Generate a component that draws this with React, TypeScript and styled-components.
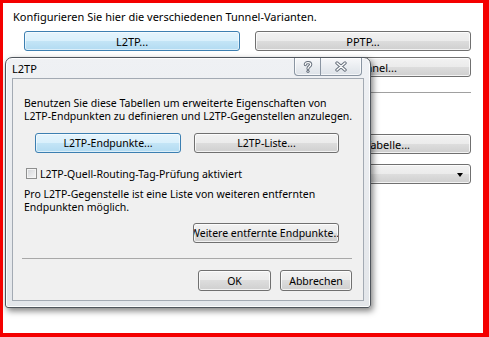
import React from 'react';
import styled, { createGlobalStyle, css } from 'styled-components';

const GlobalStyle = createGlobalStyle`
    html, body {
        margin: 0;
        padding: 0;
        background: #fff;
    }
    body {
        font-family: "Noto Sans", "Liberation Sans", Arial, sans-serif;
        font-size: 11px;
        color: #000;
    }
`;

const Page = styled.div`
    position: relative;
    box-sizing: border-box;
    width: 489px;
    height: 337px;
    border-style: solid;
    border-color: #f40000;
    border-width: 3px 6px 4px 3px;
    background: #fff;
    overflow: hidden;
`;

const Backdrop = styled.div`
    padding: 7px 0 0 10px;
`;

const Intro = styled.p`
    margin: 0;
    line-height: 14px;
`;

const ColumnGrid = styled.div<{ $top: number; $gap: number }>`
    display: grid;
    grid-template-columns: 216px 216px;
    grid-auto-rows: 20px;
    column-gap: 15px;
    row-gap: ${p => p.$gap}px;
    margin: ${p => p.$top}px 0 0 11px;
`;

const Rule = styled.div`
    width: 458px;
    margin-top: 15px;
    border-top: 1px solid #a0a0a0;
    border-bottom: 1px solid #fff;
`;

const buttonBase = css`
    box-sizing: border-box;
    display: inline-flex;
    align-items: center;
    justify-content: center;
    padding: 0;
    overflow: hidden;
    white-space: nowrap;
    font: inherit;
    color: #000;
    border-radius: 3px;
`;

const Button = styled.button<{ $w?: number; $h?: number; $default?: boolean }>`
    ${buttonBase}
    width: ${p => (p.$w ? `${p.$w}px` : '100%')};
    height: ${p => p.$h ?? 20}px;
    border: 1px solid ${p => (p.$default ? '#3c7fb1' : '#707070')};
    background: ${p =>
        p.$default
            ? 'linear-gradient(#e5f4fc 0%, #d9f0fc 50%, #c4e5f6 50%, #b2dbf2 100%)'
            : 'linear-gradient(#f2f2f2 0%, #ebebeb 50%, #dddddd 50%, #cfcfcf 100%)'};
    box-shadow: inset 0 0 0 1px ${p => (p.$default ? 'rgba(255,255,255,0.55)' : 'rgba(255,255,255,0.75)')};
`;

const Combo = styled.div`
    ${buttonBase}
    position: relative;
    height: 20px;
    border: 1px solid #707070;
    background: linear-gradient(#f2f2f2 0%, #ebebeb 50%, #dddddd 50%, #cfcfcf 100%);
    box-shadow: inset 0 0 0 1px rgba(255, 255, 255, 0.75);
    justify-content: flex-start;
    padding-left: 4px;
`;

const ComboArrow = styled.span`
    position: absolute;
    right: 7px;
    top: 8px;
    width: 0;
    height: 0;
    border-left: 3.5px solid transparent;
    border-right: 3.5px solid transparent;
    border-top: 4px solid #000;
`;

/* dialog */

const Dialog = styled.div`
    position: absolute;
    left: 2px;
    top: 54px;
    box-sizing: border-box;
    width: 366px;
    height: 251px;
    display: flex;
    flex-direction: column;
    padding: 0 6px 6px 6px;
    border: 1px solid #4f555c;
    border-radius: 7px 7px 3px 3px;
    background: linear-gradient(#eff1f4, #e3e6ea);
    box-shadow: inset 0 0 0 1px rgba(255, 255, 255, 0.85), 2px 3px 6px rgba(0, 0, 0, 0.5);
    font-size: 10.5px;
`;

const TitleBar = styled.div`
    display: flex;
    justify-content: space-between;
    align-items: center;
    height: 20px;
    font-size: 11px;
`;

const CaptionGroup = styled.div`
    align-self: flex-start;
    display: flex;
    height: 17px;
    margin-right: 2px;
    border: 1px solid #8a95a2;
    border-top: none;
    border-radius: 0 0 4px 4px;
    overflow: hidden;
    background: linear-gradient(#f7f8fa, #dde2e8);
    box-shadow: inset 0 0 0 1px rgba(255, 255, 255, 0.7);
`;

const CaptionButton = styled.div<{ $w: number }>`
    display: flex;
    align-items: center;
    justify-content: center;
    width: ${p => p.$w}px;
    & + & {
        border-left: 1px solid #8a95a2;
    }
`;

const Panel = styled.div`
    flex: 1;
    display: flex;
    flex-direction: column;
    padding-top: 18px;
    border: 1px solid #a3aab3;
    background: #f0f0f0;
`;

const Body = styled.div`
    display: flex;
    flex-direction: column;
    padding: 0 24px 0 11px;
`;

const Para = styled.p<{ $top?: number }>`
    margin: ${p => p.$top ?? 0}px 0 0 0;
    line-height: 13px;
    white-space: nowrap;
`;

const ButtonRow = styled.div`
    display: flex;
    gap: 13px;
    margin-top: 10px;
    padding-left: 11px;
`;

const CheckRow = styled.label`
    display: flex;
    align-items: center;
    gap: 3px;
    height: 13px;
    margin: 14px 0 0 2px;
    white-space: nowrap;
`;

const CheckBox = styled.span`
    box-sizing: border-box;
    flex: none;
    width: 11px;
    height: 11px;
    border: 1px solid #8e8f8f;
    background: linear-gradient(135deg, #d2d4d8, #f7f7f7);
    box-shadow: inset 0 0 0 1px #f4f4f4;
`;

const RightButton = styled(Button)`
    align-self: flex-end;
    margin-top: 9px;
`;

const Separator = styled.div`
    margin: 15px 11px 0 9px;
    border-top: 1px solid #a8a8a8;
`;

const Footer = styled.div`
    display: flex;
    justify-content: flex-end;
    gap: 9px;
    margin-top: 11px;
    padding-right: 11px;
`;

function HelpGlyph() {
    const d = 'M2.3 3.6 C2.3 0.9 7.7 0.9 7.7 3.6 C7.7 5.4 5 5.4 5 7.4';
    return (
        <svg width="10" height="12" viewBox="0 0 10 12">
            <path d={d} fill="none" stroke="#6b7480" strokeWidth="3.2" strokeLinecap="round" />
            <circle cx="5" cy="10.3" r="1.6" fill="#6b7480" />
            <path d={d} fill="none" stroke="#fff" strokeWidth="1.2" strokeLinecap="round" />
            <circle cx="5" cy="10.3" r="0.6" fill="#fff" />
        </svg>
    );
}

function CloseGlyph() {
    const d = 'M2 2 L10 9 M10 2 L2 9';
    return (
        <svg width="12" height="11" viewBox="0 0 12 11">
            <path d={d} stroke="#6b7480" strokeWidth="3.4" strokeLinecap="round" />
            <path d={d} stroke="#fff" strokeWidth="1.3" strokeLinecap="round" />
        </svg>
    );
}

export default function App() {
    return (
        <>
            <GlobalStyle />
            <Page>
                <Backdrop>
                    <Intro>Konfigurieren Sie hier die verschiedenen Tunnel-Varianten.</Intro>
                    <ColumnGrid $top={7} $gap={6}>
                        <Button $default>L2TP...</Button>
                        <Button>PPTP...</Button>
                        <span />
                        <Button>GRE-Tunnel...</Button>
                    </ColumnGrid>
                    <Rule />
                    <ColumnGrid $top={40} $gap={10}>
                        <span />
                        <Button>Gruppen-Tabelle...</Button>
                        <span />
                        <Combo>
                            <ComboArrow />
                        </Combo>
                    </ColumnGrid>
                </Backdrop>

                <Dialog>
                    <TitleBar>
                        <span>L2TP</span>
                        <CaptionGroup>
                            <CaptionButton $w={25}>
                                <HelpGlyph />
                            </CaptionButton>
                            <CaptionButton $w={40}>
                                <CloseGlyph />
                            </CaptionButton>
                        </CaptionGroup>
                    </TitleBar>
                    <Panel>
                        <Body>
                            <Para>
                                Benutzen Sie diese Tabellen um erweiterte Eigenschaften von
                                <br />
                                L2TP-Endpunkten zu definieren und L2TP-Gegenstellen anzulegen.
                            </Para>
                            <ButtonRow>
                                <Button $w={146} $default>L2TP-Endpunkte...</Button>
                                <Button $w={145}>L2TP-Liste...</Button>
                            </ButtonRow>
                            <CheckRow>
                                <CheckBox />
                                L2TP-Quell-Routing-Tag-Prüfung aktiviert
                            </CheckRow>
                            <Para $top={8}>
                                Pro L2TP-Gegenstelle ist eine Liste von weiteren entfernten
                                <br />
                                Endpunkten möglich.
                            </Para>
                            <RightButton $w={146}>Weitere entfernte Endpunkte...</RightButton>
                        </Body>
                        <Separator />
                        <Footer>
                            <Button $w={73} $h={21}>OK</Button>
                            <Button $w={72} $h={21}>Abbrechen</Button>
                        </Footer>
                    </Panel>
                </Dialog>
            </Page>
        </>
    );
}
